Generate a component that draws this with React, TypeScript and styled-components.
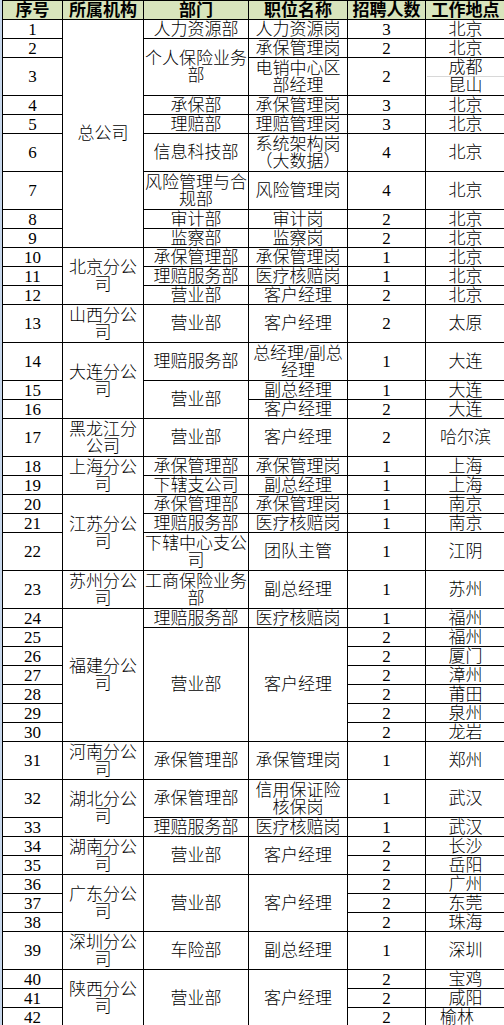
import React from "react";
import styled, { createGlobalStyle } from "styled-components";

const GlobalStyle = createGlobalStyle`
  html, body {
    margin: 0;
    padding: 0;
    background: #ffffff;
  }
  body {
    font-family: "Liberation Serif", "Noto Sans CJK SC", serif;
    color: #000000;
  }
`;

const Page = styled.div`
  width: 504px;
  height: 1025px;
  overflow: hidden;
  border-left: 2px solid #c6d6ea;
  box-sizing: border-box;
`;

const Table = styled.table`
  width: 503px;
  table-layout: fixed;
  border-collapse: collapse;
  font-size: 17px;
  line-height: 17px;
`;

const Row = styled.tr<{ $h?: number }>`
  height: ${(p) => (p.$h ?? 1) * 19}px;
`;

const HeadCell = styled.th`
  height: 18px;
  padding: 0;
  background: #d8e4bc;
  border: 1px solid #000;
  font-weight: 700;
  text-align: center;
  vertical-align: middle;
  white-space: nowrap;
`;

const Cell = styled.td<{ $left?: boolean }>`
  padding: ${(p) => (p.$left ? "0 0 0 14px" : "0 1px")};
  border: 1px solid #000;
  font-weight: 300;
  text-align: ${(p) => (p.$left ? "left" : "center")};
  vertical-align: middle;
  overflow: hidden;
  word-break: break-all;
`;

const SplitPlace = styled.div`
  display: flex;
  flex-direction: column;
  & > span + span {
    border-top: 1px solid #d8d8d8;
  }
`;

type R = {
  h?: number;
  cells: { t: React.ReactNode; rs?: number; left?: boolean }[];
};

const rows: R[] = [
  { cells: [{ t: "1" }, { t: "总公司", rs: 9 }, { t: "人力资源部" }, { t: "人力资源岗" }, { t: "3" }, { t: "北京" }] },
  { cells: [{ t: "2" }, { t: "个人保险业务部", rs: 2 }, { t: "承保管理岗" }, { t: "2" }, { t: "北京" }] },
  {
    h: 2,
    cells: [
      { t: "3" },
      { t: "电销中心区部经理" },
      { t: "2" },
      {
        t: (
          <SplitPlace>
            <span>成都</span>
            <span>昆山</span>
          </SplitPlace>
        ),
      },
    ],
  },
  { cells: [{ t: "4" }, { t: "承保部" }, { t: "承保管理岗" }, { t: "3" }, { t: "北京" }] },
  { cells: [{ t: "5" }, { t: "理赔部" }, { t: "理赔管理岗" }, { t: "3" }, { t: "北京" }] },
  { h: 2, cells: [{ t: "6" }, { t: "信息科技部" }, { t: "系统架构岗（大数据）" }, { t: "4" }, { t: "北京" }] },
  { h: 2, cells: [{ t: "7" }, { t: "风险管理与合规部" }, { t: "风险管理岗" }, { t: "4" }, { t: "北京" }] },
  { cells: [{ t: "8" }, { t: "审计部" }, { t: "审计岗" }, { t: "2" }, { t: "北京" }] },
  { cells: [{ t: "9" }, { t: "监察部" }, { t: "监察岗" }, { t: "2" }, { t: "北京" }] },
  { cells: [{ t: "10" }, { t: "北京分公司", rs: 3 }, { t: "承保管理部" }, { t: "承保管理岗" }, { t: "1" }, { t: "北京" }] },
  { cells: [{ t: "11" }, { t: "理赔服务部" }, { t: "医疗核赔岗" }, { t: "1" }, { t: "北京" }] },
  { cells: [{ t: "12" }, { t: "营业部" }, { t: "客户经理" }, { t: "2" }, { t: "北京" }] },
  { h: 2, cells: [{ t: "13" }, { t: "山西分公司" }, { t: "营业部" }, { t: "客户经理" }, { t: "2" }, { t: "太原" }] },
  { h: 2, cells: [{ t: "14" }, { t: "大连分公司", rs: 3 }, { t: "理赔服务部" }, { t: "总经理/副总经理" }, { t: "1" }, { t: "大连" }] },
  { cells: [{ t: "15" }, { t: "营业部", rs: 2 }, { t: "副总经理" }, { t: "1" }, { t: "大连" }] },
  { cells: [{ t: "16" }, { t: "客户经理" }, { t: "2" }, { t: "大连" }] },
  { h: 2, cells: [{ t: "17" }, { t: "黑龙江分公司" }, { t: "营业部" }, { t: "客户经理" }, { t: "2" }, { t: "哈尔滨" }] },
  { cells: [{ t: "18" }, { t: "上海分公司", rs: 2 }, { t: "承保管理部" }, { t: "承保管理岗" }, { t: "1" }, { t: "上海" }] },
  { cells: [{ t: "19" }, { t: "下辖支公司" }, { t: "副总经理" }, { t: "1" }, { t: "上海" }] },
  { cells: [{ t: "20" }, { t: "江苏分公司", rs: 3 }, { t: "承保管理部" }, { t: "承保管理岗" }, { t: "1" }, { t: "南京" }] },
  { cells: [{ t: "21" }, { t: "理赔服务部" }, { t: "医疗核赔岗" }, { t: "1" }, { t: "南京" }] },
  { h: 2, cells: [{ t: "22" }, { t: "下辖中心支公司" }, { t: "团队主管" }, { t: "1" }, { t: "江阴" }] },
  { h: 2, cells: [{ t: "23" }, { t: "苏州分公司" }, { t: "工商保险业务部" }, { t: "副总经理" }, { t: "1" }, { t: "苏州" }] },
  { cells: [{ t: "24" }, { t: "福建分公司", rs: 7 }, { t: "理赔服务部" }, { t: "医疗核赔岗" }, { t: "1" }, { t: "福州" }] },
  { cells: [{ t: "25" }, { t: "营业部", rs: 6 }, { t: "客户经理", rs: 6 }, { t: "2" }, { t: "福州" }] },
  { cells: [{ t: "26" }, { t: "2" }, { t: "厦门" }] },
  { cells: [{ t: "27" }, { t: "2" }, { t: "漳州" }] },
  { cells: [{ t: "28" }, { t: "2" }, { t: "莆田" }] },
  { cells: [{ t: "29" }, { t: "2" }, { t: "泉州" }] },
  { cells: [{ t: "30" }, { t: "2" }, { t: "龙岩" }] },
  { h: 2, cells: [{ t: "31" }, { t: "河南分公司" }, { t: "承保管理部" }, { t: "承保管理岗" }, { t: "1" }, { t: "郑州" }] },
  { h: 2, cells: [{ t: "32" }, { t: "湖北分公司", rs: 2 }, { t: "承保管理部" }, { t: "信用保证险核保岗" }, { t: "1" }, { t: "武汉" }] },
  { cells: [{ t: "33" }, { t: "理赔服务部" }, { t: "医疗核赔岗" }, { t: "1" }, { t: "武汉" }] },
  { cells: [{ t: "34" }, { t: "湖南分公司", rs: 2 }, { t: "营业部", rs: 2 }, { t: "客户经理", rs: 2 }, { t: "2" }, { t: "长沙" }] },
  { cells: [{ t: "35" }, { t: "2" }, { t: "岳阳" }] },
  { cells: [{ t: "36" }, { t: "广东分公司", rs: 3 }, { t: "营业部", rs: 3 }, { t: "客户经理", rs: 3 }, { t: "2" }, { t: "广州" }] },
  { cells: [{ t: "37" }, { t: "2" }, { t: "东莞" }] },
  { cells: [{ t: "38" }, { t: "2" }, { t: "珠海" }] },
  { h: 2, cells: [{ t: "39" }, { t: "深圳分公司" }, { t: "车险部" }, { t: "副总经理" }, { t: "1" }, { t: "深圳" }] },
  { cells: [{ t: "40" }, { t: "陕西分公司", rs: 3 }, { t: "营业部", rs: 3 }, { t: "客户经理", rs: 3 }, { t: "2" }, { t: "宝鸡" }] },
  { cells: [{ t: "41" }, { t: "2" }, { t: "咸阳" }] },
  { cells: [{ t: "42" }, { t: "2" }, { t: "榆林", left: true }] },
];

const headers = ["序号", "所属机构", "部门", "职位名称", "招聘人数", "工作地点"];
const widths = [60, 81, 105, 99, 78, 80];

export default function App() {
  return (
    <Page>
      <GlobalStyle />
      <Table>
        <colgroup>
          {widths.map((w, i) => (
            <col key={i} style={{ width: w }} />
          ))}
        </colgroup>
        <thead>
          <Row>
            {headers.map((h) => (
              <HeadCell key={h}>{h}</HeadCell>
            ))}
          </Row>
        </thead>
        <tbody>
          {rows.map((r, i) => (
            <Row key={i} $h={r.h}>
              {r.cells.map((c, j) => (
                <Cell key={j} rowSpan={c.rs} $left={c.left}>
                  {c.t}
                </Cell>
              ))}
            </Row>
          ))}
        </tbody>
      </Table>
    </Page>
  );
}
